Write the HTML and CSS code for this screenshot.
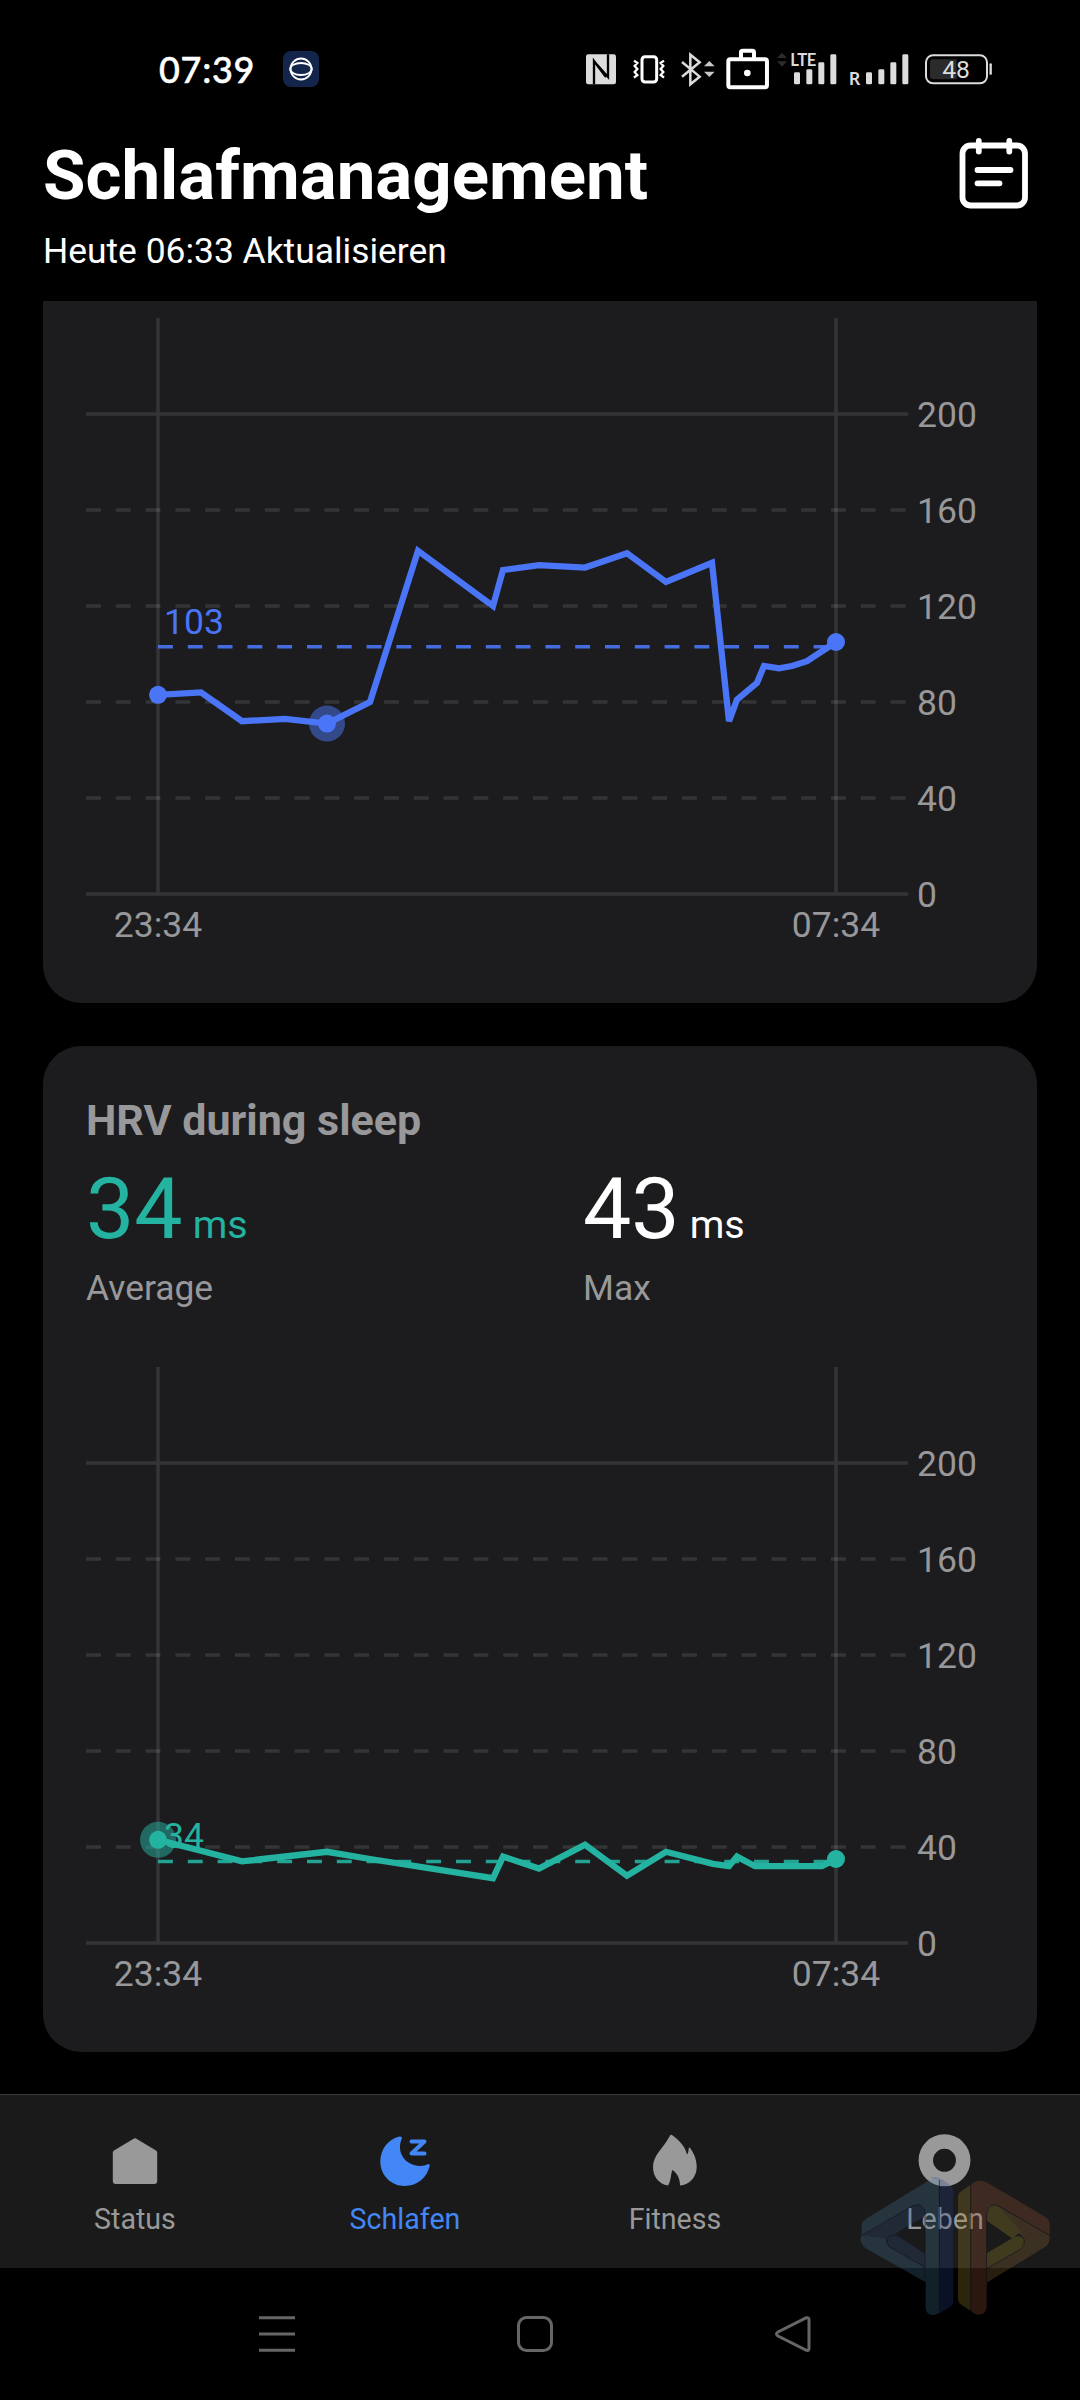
FILE: index.html
```html
<!DOCTYPE html>
<html lang="de">
<head>
    <meta charset="UTF-8">
    <meta name="viewport" content="width=device-width, initial-scale=1.0">
    <title>Schlafmanagement</title>
    <link rel="stylesheet" href="styles.css">
</head>
<body>

    <div class="status-bar">
        <span class="clock">07:39</span>
        <svg class="app-icon" viewBox="0 0 36 36">
            <rect width="36" height="36" rx="8" fill="#14254c"/>
            <g fill="none" stroke="#fff" stroke-width="1.8">
                <circle cx="18" cy="18" r="10.5"/>
                <ellipse cx="18" cy="18" rx="10.8" ry="6"/>
            </g>
        </svg>
        <div class="status-icons">
            <svg class="nfc" viewBox="48 50 90 130">
                <rect x="48" y="72" width="90" height="90" rx="7" fill="#dcdcdc"/>
                <path d="M72 162V92l36 48M114 72v68L80 102" fill="none" stroke="#000" stroke-width="7"/>
            </svg>
            <svg class="vibrate" viewBox="190 50 96 130">
                <g fill="none" stroke="#fff" stroke-width="7">
                    <rect x="217" y="79" width="44" height="76" rx="9" stroke-width="9"/>
                    <path d="M193 91l10 7-8 9 8 9-8 9 8 9-10 8M283 91l-10 7 8 9-8 9 8 9-8 9 10 8"/>
                </g>
            </svg>
            <svg class="bluetooth" viewBox="334 50 102 130">
                <path d="M337 95l53 44-28 23V73l28 23-53 43" fill="none" stroke="#dcdcdc" stroke-width="7.5"/>
                <path d="M403 108l16-16 16 16zM403 124l16 16 16-16z" fill="#c8c8c8"/>
            </svg>
            <svg class="bag" viewBox="468 50 130 130">
                <g fill="none" stroke="#fff" stroke-width="12">
                    <rect x="475" y="87" width="116" height="84" rx="6"/>
                    <path d="M513 84V66q0-5 5-5h29q5 0 5 5v18"/>
                </g>
                <circle cx="532" cy="128" r="10" fill="#fff"/>
            </svg>
            <svg class="lte" viewBox="622 50 180 130">
                <path d="M622 83l15-16 15 16zM622 93l15 16 15-16z" fill="#2c2c2c"/>
                <text x="662" y="107" class="lte-text">LTE</text>
                <g fill="#dcdcdc">
                    <rect x="673" y="126" width="18" height="36" rx="4"/>
                    <rect x="710" y="117" width="18" height="45" rx="4"/>
                    <rect x="746" y="96" width="18" height="66" rx="4"/>
                    <rect x="782" y="72" width="18" height="90" rx="4"/>
                </g>
            </svg>
            <svg class="roaming" viewBox="838 50 180 130">
                <text x="837" y="164" class="r-text">R</text>
                <g fill="#dcdcdc">
                    <rect x="889" y="126" width="18" height="36" rx="4"/>
                    <rect x="926" y="117" width="18" height="45" rx="4"/>
                    <rect x="962" y="96" width="18" height="66" rx="4"/>
                    <rect x="998" y="72" width="18" height="90" rx="4"/>
                </g>
            </svg>
            <svg class="battery" viewBox="1065 50 201 130">
                <path d="M1090 87h70v60h-70q-10 0-10-10v-40q0-10 10-10z" fill="#2b2b2b"/>
                <rect x="1068" y="75" width="183" height="84" rx="21" fill="none" stroke="#dcdcdc" stroke-width="6"/>
                <path d="M1262 102v28" stroke="#dcdcdc" stroke-width="7" stroke-linecap="round"/>
                <text x="1158" y="143" text-anchor="middle" class="battery-text">48</text>
            </svg>
        </div>
    </div>

    <header class="header">
        <div>
            <h1>Schlafmanagement</h1>
            <p class="updated">Heute 06:33 Aktualisieren</p>
        </div>
        <svg class="calendar" viewBox="0 0 70 72">
            <g fill="none" stroke="#fff" stroke-width="5.800" stroke-linecap="round">
                <rect x="3.500" y="8.500" width="62.500" height="60" rx="8"/>
                <path d="M19.800 4v10.500M50.300 4v10.500M18.500 33h33M18.500 46.300h22"/>
            </g>
        </svg>
    </header>

    <main class="content">
        <section class="card card-heart">
            <svg class="chart" viewBox="0 0 994 650">
                <g class="grid">
                    <path d="M43 106h822M43 586h822M115 10v576M793 10v576"/>
                    <path class="dashed" d="M43 202h822M43 298h822M43 394h822M43 490h822"/>
                </g>
                <g class="labels">
                    <text x="874" y="119">200</text>
                    <text x="874" y="215">160</text>
                    <text x="874" y="311">120</text>
                    <text x="874" y="407">80</text>
                    <text x="874" y="503">40</text>
                    <text x="874" y="599">0</text>
                    <text x="115" y="629" text-anchor="middle">23:34</text>
                    <text x="793" y="629" text-anchor="middle">07:34</text>
                </g>
                <g class="series blue">
                    <text x="121" y="326">103</text>
                    <path class="average" d="M115 338.800H793"/>
                    <circle class="halo" cx="284" cy="415.600" r="18"/>
                    <polyline points="115,386.8 158,384.4 199,413.2 242,410.8 284,415.6 327,394 375,242.8 450,298 460,262 496,257.2 542,259.6 584,245.2 623,274 669,254.8 686,413.2 694,391.6 714,374.8 721,358 736,360.4 749,358 764,353.2 793,334"/>
                    <circle cx="115" cy="386.800" r="9"/>
                    <circle cx="284" cy="415.600" r="9"/>
                    <circle cx="793" cy="334" r="9"/>
                </g>
            </svg>
        </section>

        <section class="card card-hrv">
            <h2>HRV during sleep</h2>
            <div class="stats">
                <div class="stat">
                    <div class="value teal-text">34<span>ms</span></div>
                    <div class="caption">Average</div>
                </div>
                <div class="stat">
                    <div class="value">43<span>ms</span></div>
                    <div class="caption">Max</div>
                </div>
            </div>
            <svg class="chart" viewBox="0 0 994 650">
                <g class="grid">
                    <path d="M43 106h822M43 586h822M115 10v576M793 10v576"/>
                    <path class="dashed" d="M43 202h822M43 298h822M43 394h822M43 490h822"/>
                </g>
                <g class="labels">
                    <text x="874" y="119">200</text>
                    <text x="874" y="215">160</text>
                    <text x="874" y="311">120</text>
                    <text x="874" y="407">80</text>
                    <text x="874" y="503">40</text>
                    <text x="874" y="599">0</text>
                    <text x="115" y="629" text-anchor="middle">23:34</text>
                    <text x="793" y="629" text-anchor="middle">07:34</text>
                </g>
                <g class="series teal">
                    <text x="121" y="491">34</text>
                    <path class="average" d="M115 504.400H793"/>
                    <circle class="halo" cx="115" cy="482.800" r="18"/>
                    <polyline points="115,482.8 199,504.4 284,494.8 327,502 450,521.2 460,499.6 496,511.6 542,487.6 584,518.8 623,494.8 670,506.8 686,509.2 694,499.6 712,509.2 779,509.2 793,502"/>
                    <circle cx="115" cy="482.800" r="9"/>
                    <circle cx="793" cy="502" r="9"/>
                </g>
            </svg>
        </section>
    </main>

    <nav class="tabs">
        <div class="tab">
            <svg viewBox="0 0 60 60">
                <path d="M29 5.500q1-.7 2 0L51 17.500q1.200.8 1.200 2.200V48q0 3-3 3H10.800q-3 0-3-3V19.700q0-1.400 1.200-2.200z"/>
            </svg>
            <span>Status</span>
        </div>
        <div class="tab active">
            <svg viewBox="0 0 60 60">
                <path d="M24.500 3.500c2-.5 3 1 2 3-6 14 6 29 23 26 2-.5 3-1.500 4-1.500 1 0 1.500 1 1 2.500C52 44 43 53 29.500 53 16 53 5.300 42 5.300 28.500 5.300 16 13.500 6 24.500 3.500z"/>
                <path class="zed" d="M36.500 8.500h13L36.500 20.500h13"/>
            </svg>
            <span>Schlafen</span>
        </div>
        <div class="tab">
            <svg viewBox="0 0 60 60">
                <path d="M25 2.500q.7-1.200 2-.5C34 7 40 13 42 21.500c1.500-1.500 1.500-4 1.700-6 .2-1.200 1-1.200 1.600-.2C50 22 51.700 28 51.700 34c0 10-7 18-16.700 18.500 0-6-2-11.500-7.500-15.500-2 4-1 10-4.500 15.500C14 51 8 44 8 34 8 22 18 16 25 2.500z"/>
            </svg>
            <span>Fitness</span>
        </div>
        <div class="tab">
            <svg viewBox="0 0 60 60">
                <circle class="ring" cx="29.500" cy="27.300" r="18.700"/>
            </svg>
            <span>Leben</span>
        </div>
    </nav>

    <div class="system-nav">
        <svg viewBox="0 0 40 40"><path d="M2 3.700h36M2 20h36M2 36.300h36"/></svg>
        <svg viewBox="0 0 40 40"><rect x="3.500" y="3.500" width="33" height="33" rx="8"/></svg>
        <svg viewBox="0 0 40 40"><path d="M34 3.800L6 18q-3 2 0 4l28 14.200q3 1 3-2V6q0-3-3-2.200z"/></svg>
    </div>

    <svg class="watermark" viewBox="840 285 575 425">
        <g opacity=".26">
            <!-- left half -->
            <path fill="#467ea2" fill-rule="evenodd" d="M1078 293V698q-10 8-22 7-18-3-19-22V607L856 504q-20-16-11-42V435q2-12 12-18L1040 305q18-12 38-12zM1035 386V562l-107-62q-18-16 0-34l107-62z"/>
            <path fill="#35548c" d="M1035 400q-4-36-38-22L846 466l76 10 75-46 38-20zM945 460q-24-2-28 14 0 14 11 26l107 62v-42z"/>
            <path fill="#2a428a" d="M1050 293q20-6 40 8l20 14q10 8 10 20V664q0 12-10 18l-32 18V300z"/>
            <!-- right half -->
            <path fill="#ae8a2e" d="M1134 352q0-14 12-20l26-18V692l-26-16q-12-8-12-20z"/>
            <path fill="#a65a32" d="M1172 314q25-20 50-6l173 102q14 8 14 26v30L1256 378q-24-14-36 8V684q-4 20-25 20-22-2-23-20z"/>
            <path fill="#9a7038" fill-rule="evenodd" d="M1220 386q12-22 36-8l152 88q4 24-12 34L1220 608v-46l104-60q20-16 0-36l-104-62z"/>
            <path fill="#ae9a2e" d="M1220 400q8-34 34-22l68 76-24 22-78-54zM1220 520l84-50q18-8 28 8 4 16-8 28l-104 60z"/>
        </g>
        <g fill="none" stroke="#12141c" stroke-opacity=".8" stroke-width="2.500">
            <path d="M1078 300V698M1035 607V400q-4-36-38-22L846 466M1035 520l-84-54q-24-2-30 10-2 14 7 24l107 62M1172 314V692M1220 680V400q8-34 36-22l152 88M1304 470q18-8 28 8 4 16-8 28l-104 60"/>
        </g>
    </svg>

</body>
</html>
```

FILE: styles.css
```css
body {
    font-family: Roboto, sans-serif;
    background-color: #000;
    color: #fff;
    margin: 0;
    width: 1080px;
    height: 2400px;
    display: flex;
    flex-direction: column;
    position: relative;
    overflow: hidden;
}

svg {
    display: block;
    flex-shrink: 0;
}

h1, h2, p {
    margin: 0;
}

.status-bar {
    height: 90px;
    display: flex;
    align-items: flex-start;
    box-sizing: border-box;
    padding: 46.67px 88px 0 159px;
}

.clock {
    font-family: Lato, sans-serif;
    font-weight: 500;
    font-size: 36px;
    line-height: 44px;
    width: 124px;
    letter-spacing: 0.7px;
    -webkit-text-stroke: 0.5px #fff;
}

.app-icon {
    width: 36px;
    height: 36px;
    margin-top: 4px;
}

.status-icons {
    display: flex;
    margin-left: auto;
}

.status-icons svg {
    height: 43.33px;
}

.nfc {
    width: 30px;
}

.vibrate {
    width: 32px;
    margin-left: 17.3px;
}

.bluetooth {
    width: 34px;
    margin-left: 16px;
}

.bag {
    width: 43.3px;
    margin-left: 10.7px;
}

.lte {
    width: 60px;
    margin-left: 8px;
}

.roaming {
    width: 60px;
    margin-left: 12px;
}

.battery {
    width: 67px;
    margin-left: 15.7px;
}

.lte-text {
    font: bold 50px Lato, sans-serif;
    fill: #dcdcdc;
    letter-spacing: -1px;
}

.r-text {
    font: 600 54px "Noto Sans", sans-serif;
    fill: #dcdcdc;
}

.battery-text {
    font: 74px Roboto, sans-serif;
    fill: #dcdcdc;
}

.header {
    height: 211px;
    display: flex;
    justify-content: space-between;
    box-sizing: border-box;
    padding: 46px 51px 0 43px;
}

h1 {
    font-size: 69px;
    line-height: 80px;
}

.updated {
    font-size: 35.4px;
    line-height: 42px;
    margin-top: 14px;
}

.calendar {
    width: 70px;
    height: 72px;
    margin-top: 1px;
}

.content {
    height: 1793px;
    padding: 0 43px;
    display: flex;
    flex-direction: column;
    gap: 43px;
}

.card {
    background-color: #1c1c1e;
    border-radius: 38px;
}

.card-heart {
    border-top-left-radius: 0;
    border-top-right-radius: 0;
    padding: 7px 0 45px;
}

.card-hrv {
    padding: 49px 0 45px;
}

h2 {
    font-size: 43px;
    line-height: 50px;
    color: #98989a;
    padding-left: 43px;
}

.stats {
    display: grid;
    grid-template-columns: 1fr 1fr;
    height: 212px;
}

.stat {
    padding-left: 43px;
}

.value {
    font-size: 86px;
    line-height: 100px;
    margin-top: 14px;
}

.value span {
    font-size: 39.5px;
    margin-left: 10px;
}

.teal-text {
    color: #24b3a1;
}

.caption {
    font-size: 35.4px;
    line-height: 42px;
    color: #98989a;
    margin-top: -8px;
}

.chart {
    width: 994px;
    height: 650px;
}

.chart text {
    font-size: 35.5px;
}

.grid path {
    fill: none;
    stroke: #fff;
    stroke-opacity: 0.11;
    stroke-width: 3.5;
}

.grid .dashed {
    stroke-dasharray: 14.9 14.9;
}

.labels {
    fill: #98989a;
}

.series polyline {
    fill: none;
    stroke: currentColor;
    stroke-width: 6.3;
}

.series circle,
.series text {
    fill: currentColor;
}

.series .halo {
    fill-opacity: 0.5;
}

.average {
    stroke: currentColor;
    stroke-opacity: 0.9;
    stroke-width: 3.5;
    stroke-dasharray: 14.9 14.9;
}

.blue {
    color: #4a75f6;
}

.teal {
    color: #24b3a1;
}

.tabs {
    height: 174px;
    box-sizing: border-box;
    border-top: 1px solid #3c3c3c;
    background-color: #1a1a1a;
    display: grid;
    grid-template-columns: repeat(4, 1fr);
}

.tab {
    display: flex;
    flex-direction: column;
    align-items: center;
    color: #999;
    font-size: 28.6px;
    line-height: 34px;
    padding-top: 38px;
}

.tab svg {
    width: 60px;
    height: 60px;
    fill: currentColor;
    margin-bottom: 9px;
}

.tab .zed {
    fill: none;
    stroke: currentColor;
    stroke-width: 4;
    stroke-linecap: round;
    stroke-linejoin: round;
}

.tab .ring {
    fill: none;
    stroke: currentColor;
    stroke-width: 14.5;
}

.active {
    color: #4287f5;
}

.system-nav {
    height: 132px;
    box-sizing: border-box;
    display: flex;
    justify-content: space-between;
    padding: 46px 268px 0 257px;
}

.system-nav svg {
    width: 40px;
    height: 40px;
    fill: none;
    stroke: #666;
    stroke-width: 3;
}

.watermark {
    position: absolute;
    left: 860px;
    top: 2175px;
    width: 191.7px;
    height: 141.7px;
}
```
